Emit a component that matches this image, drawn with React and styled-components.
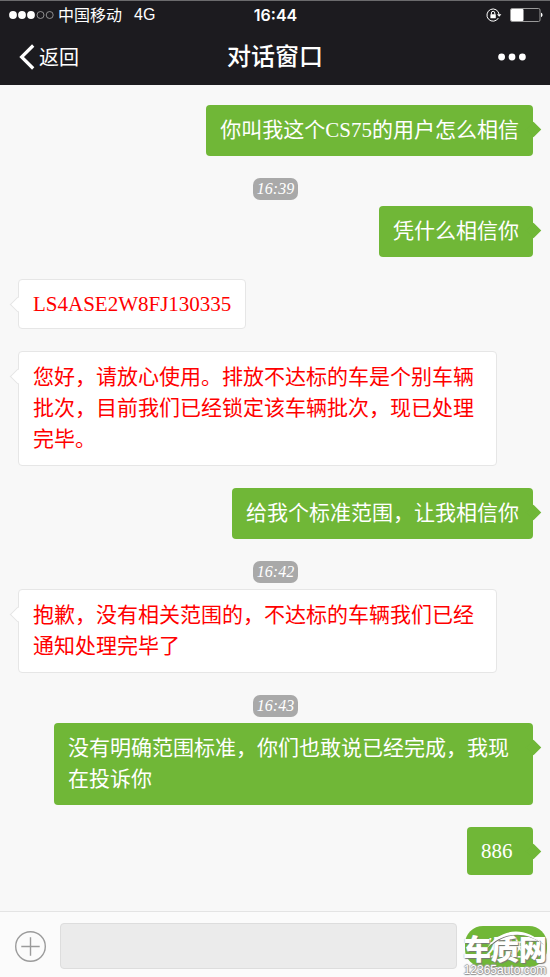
import React, {useState} from 'react'
import styled, { createGlobalStyle } from "styled-components"

const GlobalStyle = createGlobalStyle`
    body {
        margin: 0;
        background-color: #f8f8f8;
    }
    button, input {
        font: inherit;
        margin: 0;
        padding: 0;
        border: 0;
    }
`

const Container = styled.div`
    display: flex;
    flex-direction: column;
    min-height: 100vh;
    box-sizing: border-box;
    background-color: #f8f8f8;
    font-family: "Liberation Serif", "Noto Sans CJK SC", sans-serif;
    font-size: 21px;
`

const Header = styled.header`
    background-color: #1c1b1f;
    border-top: 1px solid #6b6b6d;
    color: #ffffff;
    font-family: Inter, "Noto Sans CJK SC", sans-serif;
`

const StatusBar = styled.div`
    display: grid;
    grid-template-columns: 1fr auto 1fr;
    align-items: center;
    height: 27px;
    padding: 0 7px 0 8px;
    font-size: 16px;
    line-height: 24px;
`

const Carrier = styled.div`
    display: flex;
    align-items: center;
    gap: 4px;
`

const Network = styled.span`
    margin-left: 8px;
    font-family: "Liberation Sans", sans-serif;
`

const Clock = styled.time`
    font-weight: 600;
`

const StatusIcons = styled.div`
    display: flex;
    align-items: center;
    justify-content: flex-end;
    gap: 8px;
`

const NavBar = styled.nav`
    display: grid;
    grid-template-columns: 1fr auto 1fr;
    align-items: center;
    height: 57px;
    padding: 0 19px;
`

const BackLink = styled.a`
    display: flex;
    align-items: center;
    gap: 4px;
    color: #ffffff;
    font-size: 20px;
    text-decoration: none;
`

const Title = styled.h1`
    margin: 0;
    font-size: 24px;
    font-weight: 500;
    line-height: 36px;
`

const MoreButton = styled.button`
    display: flex;
    justify-self: end;
    padding-right: 5px;
    background: none;
    color: #ffffff;
    cursor: pointer;
`

const MessageList = styled.main`
    display: flex;
    flex: 1;
    flex-direction: column;
    align-items: flex-start;
    padding: 20px 17px 12px 18px;
`

const Time = styled.time`
    align-self: center;
    margin-bottom: 6px;
    padding: 0 4px;
    border-radius: 7px;
    background-color: #a9a9a9;
    color: #ffffff;
    font-size: 16px;
    font-style: italic;
    line-height: 22px;
`

const Bubble = styled.div`
    position: relative;
    align-self: ${props => props.$mine ? 'flex-end' : 'flex-start'};
    box-sizing: border-box;
    min-width: 66px;
    max-width: 93%;
    margin-bottom: 22px;
    padding: 10px 14px;
    border: ${props => props.$mine ? '0' : '1px solid #e6e6e6'};
    border-radius: 4px;
    background-color: ${props => props.$mine ? '#70b737' : '#ffffff'};
    color: ${props => props.$mine ? '#ffffff' : '#ff0000'};
    line-height: ${props => props.$latin ? '28px' : '31px'};

    &::after {
        content: "";
        position: absolute;
        top: 19px;
        ${props => props.$mine ? 'right: -6px' : 'left: -7px'};
        box-sizing: border-box;
        width: 11px;
        height: 11px;
        border: ${props => props.$mine ? '0' : '1px solid #e6e6e6'};
        border-top: 0;
        border-right: 0;
        background-color: inherit;
        transform: rotate(45deg);
    }
`

const Footer = styled.form`
    position: relative;
    display: flex;
    align-items: center;
    box-sizing: border-box;
    padding: 11px 3px 8px 15px;
    border-top: 1px solid #e4e4e4;
    background-color: #fbfbfb;
`

const AddButton = styled.button`
    display: flex;
    margin-right: 13px;
    background: none;
    cursor: pointer;
`

const Input = styled.input`
    flex: 1;
    min-width: 0;
    height: 46px;
    box-sizing: border-box;
    padding: 0 10px;
    border: 1px solid #dddddd;
    border-radius: 4px;
    background-color: #ebebeb;
    outline: 0;
`

const SendButton = styled.button`
    width: 82px;
    height: 41px;
    margin-left: 8px;
    border-radius: 18px;
    background-color: #70b737;
    color: #ffffff;
    cursor: pointer;
`

const SiteMark = styled.div`
    position: absolute;
    right: 3px;
    bottom: 0;
    display: flex;
    flex-direction: column;
    align-items: center;
    color: #ffffff;
    font-family: "Liberation Sans", "Noto Sans CJK SC", sans-serif;
    pointer-events: none;
`

const MarkArc = styled.svg`
    position: absolute;
    top: -9px;
    right: 2px;
`

const MarkName = styled.strong`
    font-size: 28px;
    font-weight: 900;
    line-height: 24px;
    text-shadow: 1px 1px 1px #777777, 0 0 1px #999999;
`

const MarkUrl = styled.span`
    font-size: 12px;
    line-height: 14px;
    text-shadow: 1px 0 1px #888888, -1px 0 1px #aaaaaa, 0 1px 1px #888888, 0 -1px 1px #aaaaaa;
`

const messages = [
    { text: "你叫我这个CS75的用户怎么相信", mine: true },
    { time: "16:39" },
    { text: "凭什么相信你", mine: true },
    { text: "LS4ASE2W8FJ130335", latin: true },
    { text: "您好，请放心使用。排放不达标的车是个别车辆批次，目前我们已经锁定该车辆批次，现已处理完毕。" },
    { text: "给我个标准范围，让我相信你", mine: true },
    { time: "16:42" },
    { text: "抱歉，没有相关范围的，不达标的车辆我们已经通知处理完毕了" },
    { time: "16:43" },
    { text: "没有明确范围标准，你们也敢说已经完成，我现在投诉你", mine: true },
    { text: "886", mine: true, latin: true },
];

const Signal = () => (
    <svg width="46" height="10" viewBox="0 0 46 10">
        {[5, 14, 23].map(x => <circle key={x} cx={x} cy="5" r="3.9" fill="#fff" />)}
        {[32.5, 41.7].map(x => <circle key={x} cx={x} cy="5" r="3.5" fill="none" stroke="#aaa" strokeWidth="0.8" />)}
    </svg>
)

const RotationLock = () => (
    <svg width="16" height="14" viewBox="0 0 16 14" fill="none" stroke="#fff">
        <path d="M12.4 10A6.1 6.1 0 1 1 13.1 6.4" strokeWidth="1" />
        <path d="M11 6.2h4.4l-2.2 2.6z" fill="#fff" stroke="none" />
        <path d="M5.4 6.5V5a1.7 1.7 0 0 1 3.4 0v1.5" strokeWidth="1" />
        <rect x="4.4" y="6.2" width="5.4" height="4.1" rx="0.5" fill="#fff" stroke="none" />
    </svg>
)

const Battery = () => (
    <svg width="33" height="14" viewBox="0 0 33 14">
        <rect x="0.5" y="0.5" width="29.5" height="13" rx="1.5" fill="none" stroke="#999" />
        <rect x="1" y="1" width="12.5" height="12" rx="1" fill="#fff" />
        <path d="M31 4.8c2 .6 2 3.8 0 4.4z" fill="#fff" />
    </svg>
)

const App = () => {

    const [draft, setDraft] = useState('');

    return (
        <Container>
            <GlobalStyle/>
            <Header>
                <StatusBar>
                    <Carrier>
                        <Signal/>
                        <span>中国移动</span>
                        <Network>4G</Network>
                    </Carrier>
                    <Clock>16:44</Clock>
                    <StatusIcons>
                        <RotationLock/>
                        <Battery/>
                    </StatusIcons>
                </StatusBar>
                <NavBar>
                    <BackLink href="#">
                        <svg width="16" height="26" viewBox="0 0 16 26" fill="none" stroke="#fff" strokeWidth="3.2">
                            <path d="M14.2 1.5L2.6 13l11.6 11.5" />
                        </svg>
                        返回
                    </BackLink>
                    <Title>对话窗口</Title>
                    <MoreButton type="button" aria-label="更多">
                        <svg width="28" height="8" viewBox="0 0 28 8" fill="#fff">
                            <circle cx="3.6" cy="4" r="3.4" />
                            <circle cx="14" cy="4" r="3.4" />
                            <circle cx="24.4" cy="4" r="3.4" />
                        </svg>
                    </MoreButton>
                </NavBar>
            </Header>

            <MessageList>
                {messages.map((item, i) => item.time
                    ? <Time key={i}>{item.time}</Time>
                    : <Bubble key={i} $mine={item.mine} $latin={item.latin}>{item.text}</Bubble>
                )}
            </MessageList>

            <Footer onSubmit={event => event.preventDefault()}>
                <AddButton type="button" aria-label="添加">
                    <svg width="32" height="32" viewBox="0 0 32 32" fill="none" stroke="#9b9b9b" strokeWidth="1.4">
                        <circle cx="15.5" cy="16.5" r="14.8" />
                        <path d="M15.5 7.3v18.4M6.3 16.5h18.4" />
                    </svg>
                </AddButton>
                <Input
                    aria-label="消息"
                    value={draft}
                    onChange={event => setDraft(event.target.value)}
                />
                <SendButton type="submit">发送</SendButton>
                <SiteMark>
                    <MarkName>车质网</MarkName>
                    <MarkUrl>12365auto.com</MarkUrl>
                    <MarkArc width="60" height="20" viewBox="0 0 60 20">
                        <path d="M2 18C14 0 40 -4 58 14C40 0 18 1 2 18z" fill="#777" transform="translate(1 1)" />
                        <path d="M2 18C14 -1 40 -5 58 14C40 0 18 2 2 18z" fill="#fff" />
                    </MarkArc>
                </SiteMark>
            </Footer>
        </Container>
    )
}

export default App
